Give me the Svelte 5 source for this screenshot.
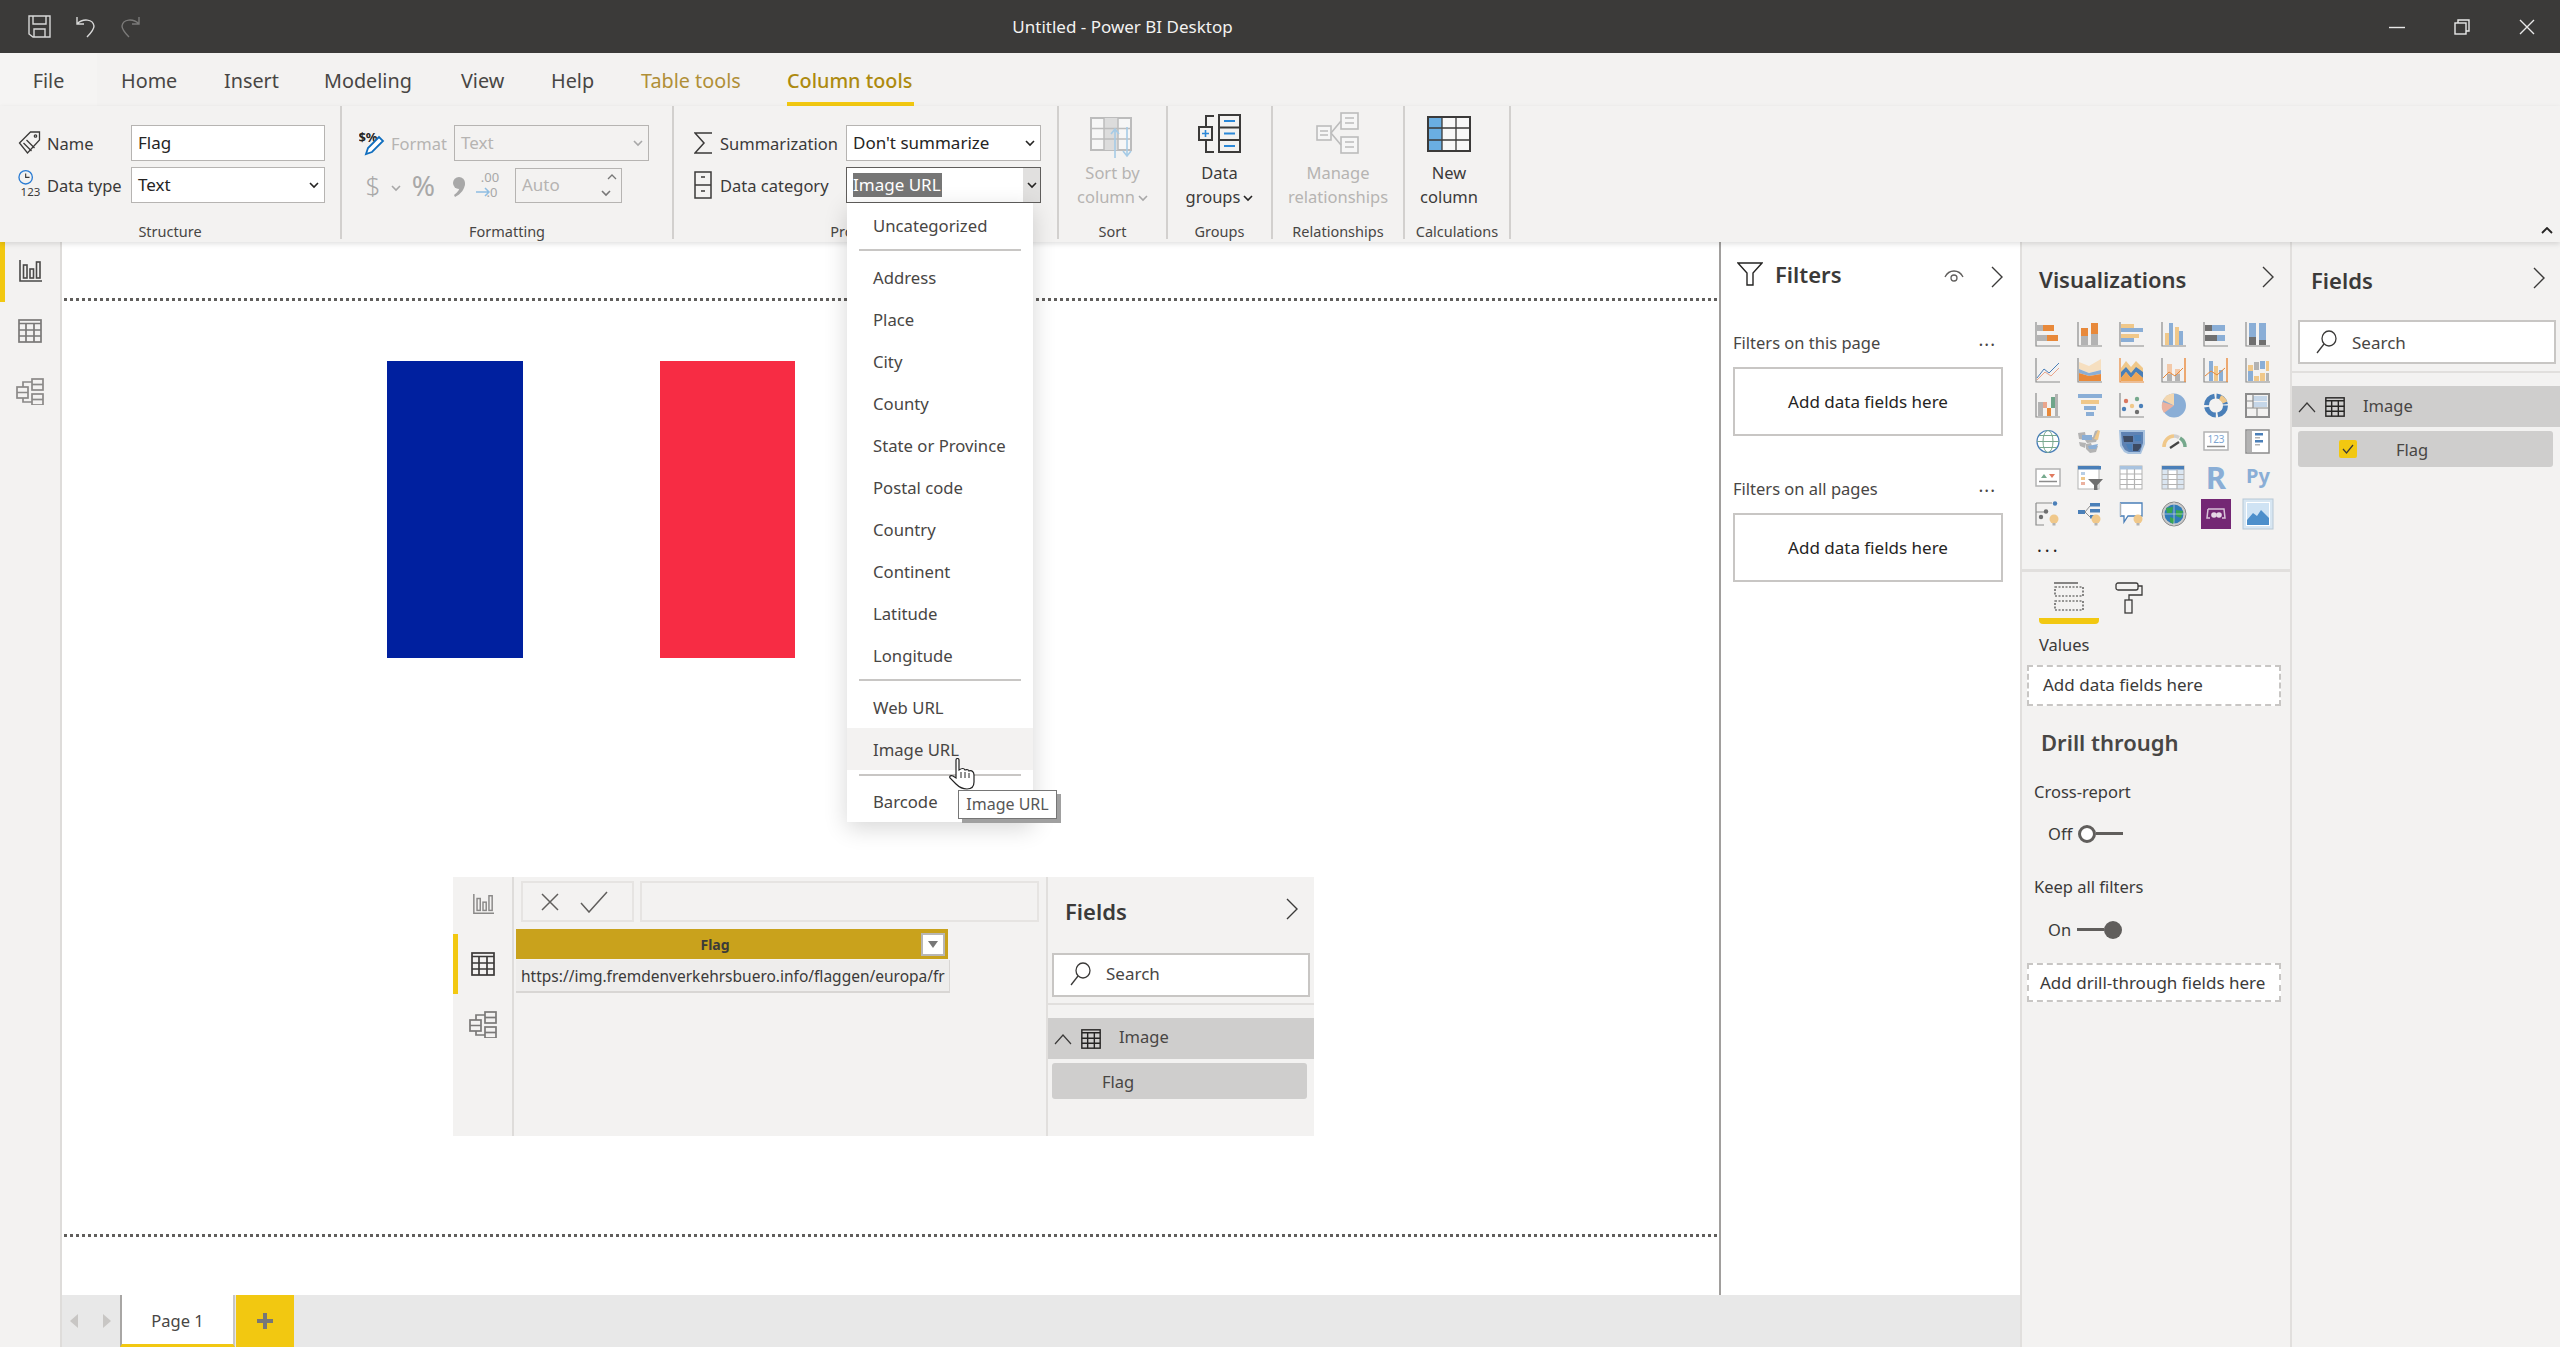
<script>
  const tabs = ['Home', 'Insert', 'Modeling', 'View', 'Help'];
  const cats1 = ['Address', 'Place', 'City', 'County', 'State or Province', 'Postal code', 'Country', 'Continent', 'Latitude', 'Longitude'];

  const or = '#e8893a', gr = '#b3b3b3', dg = '#6f6f6f', bl = '#8aaed6', db = '#4a7fb8', tn = '#f0c88a', ax = '#8c8c8c';
  const r = (x, y, w, h, c) => `<rect x="${x}" y="${y}" width="${w}" height="${h}" fill="${c}"/>`;
  const p = (d, c, s = 1) => `<path d="${d}" fill="none" stroke="${c}" stroke-width="${s}"/>`;
  const f = (d, c) => `<path d="${d}" fill="${c}"/>`;
  const axes = p('M1 0V24H25', ax, 1.2);
  const c = (x, y, rad, col) => `<circle cx="${x}" cy="${y}" r="${rad}" fill="${col}"/>`;
  const bulb = c(19, 18, 4.5, tn) + r(17.5, 22, 3, 2.5, gr);
  const t = (x, y, s, col, w, txt) => `<text x="${x}" y="${y}" font-size="${s}" fill="${col}" font-weight="${w}" font-family="Noto Sans, sans-serif" text-anchor="middle">${txt}</text>`;

  // visual gallery, row by row
  const viz = [
    axes + r(2, 3, 6, 6, gr) + r(8, 3, 11, 6, or) + r(2, 13, 10, 6, gr) + r(12, 13, 11, 6, or),
    axes + r(4, 14, 7, 9, gr) + r(4, 6, 7, 8, or) + r(14, 12, 7, 11, gr) + r(14, 1, 7, 11, or),
    axes + r(2, 2, 13, 4, tn) + r(2, 6, 22, 4, bl) + r(2, 12, 18, 4, tn) + r(2, 16, 13, 4, bl),
    axes + r(4, 11, 4, 12, tn) + r(8, 1, 4, 22, bl) + r(14, 5, 4, 18, tn) + r(18, 9, 4, 14, bl),
    axes + r(2, 3, 7, 6, dg) + r(9, 3, 13, 6, bl) + r(2, 13, 12, 6, dg) + r(14, 13, 8, 6, bl),
    axes + r(4, 1, 7, 14, bl) + r(4, 15, 7, 8, dg) + r(14, 1, 7, 17, bl) + r(14, 18, 7, 5, dg),
    axes + p('M2 20L9 11L14 15L24 5', db) + p('M2 22L10 14L16 18L24 10', '#e9a58c'),
    axes + f('M2 4L12 8L24 1V12L12 15L2 11Z', '#f6dfc0') + f('M2 11L12 15L24 12V16L12 18L2 15Z', bl) + f('M2 15L12 18L24 16V23H2Z', or),
    p('M1 0V24H25', or, 1.2) + f('M2 10L7 3L12 9L17 3L24 10V23H2Z', tn) + f('M2 14L7 9L12 15L17 9L24 14L24 20L17 14L12 20L7 14L2 20Z', db) + f('M2 20L7 14L12 20L17 14L24 20V23H2Z', '#efa556'),
    axes + p('M24 0V24', or, 1.4) + r(6, 6, 5, 10, '#f3c9a8') + r(6, 16, 5, 7, gr) + r(14, 11, 5, 5, '#f3c9a8') + r(14, 16, 5, 7, gr) + p('M2 20L8 14L14 18L22 10', or),
    axes + p('M24 0V24', or, 1.4) + r(6, 3, 4, 20, bl) + r(11, 8, 4, 15, tn) + r(16, 12, 4, 11, bl) + p('M2 18L8 13L14 17L22 10', or),
    axes + r(3, 7, 5, 6, tn) + r(3, 13, 5, 10, bl) + r(9, 4, 5, 8, gr) + r(9, 18, 5, 5, tn) + r(15, 3, 5, 8, bl) + r(15, 15, 5, 8, tn) + r(21, 3, 3, 10, tn) + r(21, 15, 3, 8, gr),
    axes + r(3, 9, 5, 14, gr) + r(8, 9, 4, 6, '#e9a58c') + r(12, 15, 4, 8, or) + r(16, 4, 4, 11, '#6fa58a') + r(20, 1, 3, 22, gr),
    r(1, 1, 24, 4, bl) + r(4, 7, 18, 4, tn) + r(7, 13, 12, 4, bl) + r(9, 19, 8, 4, bl),
    axes + c(7, 8, 2.2, '#d9775f') + c(18, 6, 2.2, '#76a98d') + c(13, 13, 2.2, tn) + c(5, 16, 2.2, db) + c(22, 13, 2.2, db) + c(18, 19, 2.2, dg),
    c(13, 12.5, 12, '#8aaed6') + f('M13 12.5L2 7A12 12 0 0 1 13 .5Z', '#f3d7b0') + f('M13 12.5L3 20A12 12 0 0 1 1.5 9Z', '#ebb2a0'),
    `<circle cx="13" cy="12.5" r="9.5" fill="none" stroke="${db}" stroke-width="5" stroke-dasharray="13 2"/>` + `<path d="M17 4.5A9.5 9.5 0 0 1 22 9.5" fill="none" stroke="${tn}" stroke-width="5"/>`,
    `<rect x="1" y="1" width="23" height="23" fill="none" stroke="${ax}" stroke-width="2"/>` + r(8, 3, 14, 5, '#c5d6e8') + r(8, 9, 14, 5, '#c5d6e8') + p('M1 15H24M12 15V24M8 1V15M1 8H8', ax, 1.2),
    `<circle cx="13" cy="12.5" r="11" fill="#fff" stroke="${db}" stroke-width="1.2"/><ellipse cx="13" cy="12.5" rx="5" ry="11" fill="none" stroke="#79a88f"/>` + p('M2 12.5H24M4 6.5H22M4 18.5H22', '#79a88f'),
    f('M1 4L8 3L9 9L16 8L18 2L21 1V8L19 13L10 14L8 11L2 10Z', gr) + f('M5 6H15V11H5Z', bl) + f('M17 10L21 1L23 2L21 11Z', tn) + f('M2 13L9 14L8 19L3 17Z', gr) + f('M9 15L14 14L15 17L21 17L19 23L13 24L9 20Z', gr) + f('M11 17L21 15L19 20L12 20Z', bl),
    f('M0 1H26V15L22 25H9L5 23L1 17Z', '#a9c3df') + f('M2 3H24V14L21 23H10L6 21L3 16Z', '#5e82b3') + f('M4 7H14V13H5Z', '#3d4b63') + f('M15 6H22V12H16Z', '#4a7fb8') + f('M7 15H13V22L9 20Z', '#4a7fb8') + f('M14 15H22V18L19 22H14Z', '#3d4b63'),
    `<path d="M3 18A10.5 10.5 0 0 1 13 7" fill="none" stroke="${tn}" stroke-width="3.5"/><path d="M13 7A10.5 10.5 0 0 1 18 8.5" fill="none" stroke="#cfcfcf" stroke-width="3.5"/><path d="M19 9A10.5 10.5 0 0 1 24 18" fill="none" stroke="#76a98d" stroke-width="3.5"/>` + p('M9 19L18 13', '#444', 2.2),
    `<rect x="1" y="3" width="24" height="18" fill="#fff" stroke="${gr}" stroke-width="1.5"/>` + t(13, 14, 10, '#7ea5d1', 400, '123') + p('M4 17.5H22', ax, 1.5),
    `<rect x="1" y="1" width="23" height="23" fill="#fff" stroke="${ax}" stroke-width="1.5"/>` + r(2, 2, 5, 21, gr) + r(10, 4, 8, 2.5, db) + r(10, 8, 5, 1.5, gr) + r(10, 11, 8, 2.5, db) + r(10, 15, 5, 1.5, gr),
    `<rect x="1" y="4" width="24" height="17" fill="#fff" stroke="${gr}" stroke-width="1.5"/>` + f('M6 13L9 9L12 13Z', '#76a98d') + f('M14 9H20L17 13Z', '#e07a5f') + p('M4 16.5H22', ax, 1.5),
    `<rect x="1" y="1" width="21" height="23" fill="#fff" stroke="${gr}" stroke-width="1"/>` + r(1, 1, 23, 3.5, db) + r(4, 7, 4, 3, '#b7cde5') + r(4, 12, 4, 3, tn) + r(4, 17, 4, 3, '#ebb2a0') + f('M11 14H26L20.5 20V25H17V20Z', '#6f6f6f'),
    `<rect x="1" y="1" width="22" height="23" fill="#fff" stroke="${gr}" stroke-width="1"/>` + r(1, 1, 22, 3.5, '#a9c3df') + p('M1 9H23M1 14.5H23M1 19.5H23M8 4V24M15.5 4V24', gr, 1.2),
    `<rect x="1" y="1" width="22" height="23" fill="#dbe6f1" stroke="${gr}" stroke-width="1"/>` + r(1, 1, 22, 3.5, db) + r(7, 6, 9, 17, '#fff') + p('M1 9.5H23M1 14.5H23M1 19.5H23M7 4V24M16 4V24', gr, 1.2),
    t(13, 24, 31, '#8aaed6', 700, 'R'),
    t(13, 18, 20, '#8aaed6', 700, 'Py'),
    p('M1 2V24H9M1 2H17M1 11H13', ax, 1.2) + c(20, 2.5, 2.2, db) + c(11, 10.5, 2.2, dg) + c(6, 16, 2.2, dg) + bulb,
    r(1, 9, 7, 4, db) + p('M8 11L13 5M8 11L13 16', ax) + r(13, 2, 10, 3.5, db) + r(13, 8, 10, 3.5, db) + r(13, 14, 4, 3.5, db) + bulb,
    `<path d="M1.5 2H23V15H9L5 21V15H1.5Z" fill="#fff" stroke="${db}" stroke-width="1.3"/>` + `<path d="M1.5 2V15" stroke="${gr}"/>` + bulb,
    `<circle cx="13" cy="13" r="12" fill="#c9c9c9" stroke="#8a8a8a"/>` + c(13, 13, 9.5, '#2f7bb8') + f('M5 7L12 6L11 12L6 12Z', '#38a552') + f('M15 9L22 10L20 17L15 15Z', '#38a552') + f('M9 16L14 18L12 23L9 21Z', '#38a552') + p('M1 13H25M13 1V25', '#e0e0e0', .6),
    r(-2, -2, 30, 30, '#742774') + `<path d="M5 8H21L22 17H19M7 17H4L5 8" fill="none" stroke="#d8c2d8" stroke-width="1.5"/>` + c(11, 14, 2.8, '#e6d6e6') + c(16, 14, 2.8, '#e6d6e6'),
    `<rect x="-2" y="-2" width="30" height="30" fill="#d7e6f2" stroke="#b8c8d6"/>` + r(1, 1, 24, 24, '#fff') + r(2, 2, 22, 22, '#cfe3f4') + f('M2 19L8 12L12 15L16 9L24 17V24H2Z', '#4d8fcb'),
  ];
</script>

{#snippet chev(cls = '')}
  <svg class="chev {cls}" viewBox="0 0 12 22"><path d="M1 1L11 11L1 21" fill="none" stroke="#3b3a39" stroke-width="1.4"/></svg>
{/snippet}

{#snippet caret(col = '#252423')}
  <svg class="caret" viewBox="0 0 10 7"><path d="M1 1L5 5L9 1" fill="none" stroke={col} stroke-width="1.6"/></svg>
{/snippet}

{#snippet reportIcon(col, w = 24)}
  <svg width={w} height={w} viewBox="0 0 24 24" fill="none" stroke={col} stroke-width="1.6"><path d="M2 1V22H24"/><rect x="5.5" y="6" width="3.5" height="13"/><rect x="12" y="10" width="3.5" height="9"/><rect x="18.5" y="3" width="3.5" height="16"/></svg>
{/snippet}

{#snippet tableIcon(col, w = 24)}
  <svg width={w} height={w} viewBox="0 0 24 24" fill="none" stroke={col} stroke-width="1.7"><rect x="1" y="1" width="22" height="22"/><path d="M1 4.5H23M1 11H23M1 17H23M8 4.5V23M16 4.5V23"/></svg>
{/snippet}

{#snippet modelIcon(col, w = 28)}
  <svg width={w} height={w} viewBox="0 0 28 28" fill="none" stroke={col} stroke-width="1.7"><rect x="16" y="2" width="11" height="11"/><path d="M16 7.5H27"/><rect x="16" y="17" width="11" height="11"/><path d="M16 22.5H27"/><rect x="1" y="10" width="11" height="11"/><path d="M1 15.5H12M7 10V5H16M7 21V25H16"/></svg>
{/snippet}

{#snippet searchBox()}
  <div class="search">
    <svg width="22" height="24" viewBox="0 0 22 24" fill="none" stroke="#3b3a39" stroke-width="1.3"><ellipse cx="13" cy="8.5" rx="7" ry="7.5"/><path d="M8 14L1 23"/></svg>
    <span>Search</span>
  </div>
{/snippet}

<div class="app">
  <header class="titlebar">
    <div class="qat">
      <svg width="23" height="23" viewBox="0 0 23 23" fill="none" stroke="#d8d8d8" stroke-width="1.4"><path d="M1 1H22V22H5L1 19Z"/><path d="M5 1V9H18V1M6 22V14H17V22"/></svg>
      <svg width="21" height="23" viewBox="0 0 21 23" fill="none" stroke="#d8d8d8" stroke-width="1.4"><path d="M2 2V9H9M2 9C8 3 18 4 19 11C19 15 16 18 12 22"/></svg>
      <svg class="redo" width="21" height="23" viewBox="0 0 21 23" fill="none" stroke="#7b7a79" stroke-width="1.4"><path d="M19 2V9H12M19 9C13 3 3 4 2 11C2 15 5 18 9 22"/></svg>
    </div>
    <span class="wintitle">Untitled - Power BI Desktop</span>
    <div class="winbtns">
      <svg width="16" height="16" viewBox="0 0 16 16" stroke="#e8e8e8" stroke-width="1.4"><path d="M0 8.5H16"/></svg>
      <svg width="16" height="16" viewBox="0 0 16 16" fill="none" stroke="#e8e8e8" stroke-width="1.4"><rect x="1" y="4" width="11" height="11"/><path d="M4 4V1H15V12H12"/></svg>
      <svg width="16" height="16" viewBox="0 0 16 16" stroke="#e8e8e8" stroke-width="1.4"><path d="M1 1L15 15M15 1L1 15"/></svg>
    </div>
  </header>

  <nav class="tabs">
    <span class="tab file">File</span>
    {#each tabs as tab}
      <span class="tab">{tab}</span>
    {/each}
    <span class="tab ctx">Table tools</span>
    <span class="tab ctx active">Column tools</span>
  </nav>

  <section class="ribbon">
    <div class="group g-structure">
      <div class="form">
        <div class="row">
          <svg class="ico" width="22" height="24" viewBox="0 0 22 24" fill="none" stroke="#3b3a39" stroke-width="1.3"><path d="M1 12L12 1H21V9L9 22Z"/><path d="M5 12L13 20M8 9L16 17"/><circle cx="17" cy="5" r="1.2"/></svg>
          <span class="lbl name">Name</span>
          <div class="field w194">Flag</div>
        </div>
        <div class="row">
          <svg class="ico" width="24" height="34" viewBox="0 0 24 34"><circle cx="8" cy="9" r="7" fill="none" stroke="#2b7cd3" stroke-width="1.4"/><path d="M8 5V9H12" fill="none" stroke="#3b3a39" stroke-width="1.2"/><text x="13" y="28" font-size="12" font-family="Noto Sans, sans-serif" fill="#3b3a39" text-anchor="middle">123</text></svg>
          <span class="lbl name">Data type</span>
          <div class="field w194 sel">Text {@render caret()}</div>
        </div>
      </div>
      <span class="glabel">Structure</span>
    </div>

    <div class="group g-format">
      <div class="form">
        <div class="row">
          <svg class="ico" width="26" height="28" viewBox="0 0 26 28"><text x="9" y="13" font-size="13" font-weight="700" font-family="Noto Sans, sans-serif" fill="#252423" text-anchor="middle">$%</text><path d="M7 25L9 19L20 8L24 12L13 23Z" fill="#fff" stroke="#106ebe" stroke-width="1.8"/></svg>
          <span class="lbl dim fmt">Format</span>
          <div class="field w195 off sel">Text {@render caret('#a8a8a8')}</div>
        </div>
        <div class="row">
          <span class="glyph dollar">$</span>
          <span class="tiny">{@render caret('#a8a8a8')}</span>
          <span class="glyph pct">%</span>
          <svg class="comma" width="14" height="20" viewBox="0 0 14 20"><circle cx="7" cy="6" r="6" fill="#a8a8a8"/><path d="M13 6C13 12 9 17 3 20L2 18C6 15 8 12 8 8Z" fill="#a8a8a8"/></svg>
          <svg class="decs" width="24" height="30" viewBox="0 0 24 30"><text x="14" y="12" font-size="13" font-family="Noto Sans, sans-serif" fill="#a8a8a8" text-anchor="middle">.00</text><text x="16" y="27" font-size="13" font-family="Noto Sans, sans-serif" fill="#a8a8a8" text-anchor="middle">.0</text><path d="M0 22H13M9 18L13 22L9 26" fill="none" stroke="#8ebde2" stroke-width="1.5"/></svg>
          <div class="field auto off">
            Auto
            <span class="spin">
              <svg class="caret up" viewBox="0 0 10 7"><path d="M1 5L5 1L9 5" fill="none" stroke="#777" stroke-width="1.3"/></svg>
              {@render caret('#777')}
            </span>
          </div>
        </div>
      </div>
      <span class="glabel">Formatting</span>
    </div>

    <div class="group g-props">
      <div class="form">
        <div class="row">
          <svg class="ico" width="18" height="24" viewBox="0 0 18 24" fill="none" stroke="#3b3a39" stroke-width="1.5"><path d="M18 2H1L10 12L1 22H18"/></svg>
          <span class="lbl prop">Summarization</span>
          <div class="field w195 sel">Don't summarize {@render caret()}</div>
        </div>
        <div class="row">
          <svg class="ico" width="18" height="28" viewBox="0 0 18 28" fill="none" stroke="#3b3a39" stroke-width="1.5"><rect x="1" y="1" width="16" height="26"/><path d="M1 14H17M7 6H11M7 20H11"/></svg>
          <span class="lbl prop">Data category</span>
          <div class="field w195 focus"><mark>Image URL</mark><span class="btn">{@render caret()}</span></div>
        </div>
      </div>
      <span class="glabel">Properties</span>
    </div>

    <div class="group g-big g-sort">
      <svg class="big" width="46" height="42" viewBox="0 0 46 42" fill="none"><rect x="1" y="1" width="40" height="32" fill="#f6f6f6" stroke="#bcbcbc" stroke-width="2"/><rect x="14" y="1" width="14" height="32" fill="#dcdcdc"/><path d="M1 11.5H41M1 22H41M14 1V33M28 1V33" stroke="#bcbcbc" stroke-width="1.5"/><path d="M25 41V12M21 17L25 12L29 17M37 10V39M33 34L37 39L41 34" stroke="#a6cbe6" stroke-width="1.6"/></svg>
      <span class="bigtext dim">Sort by<br />column<span class="inl">{@render caret('#a8a8a8')}</span></span>
      <span class="glabel">Sort</span>
    </div>

    <div class="group g-big g-groups">
      <svg class="big" width="44" height="40" viewBox="0 0 44 40" fill="none"><path d="M16 2H8V12M8 26V38H16" stroke="#3b3a39" stroke-width="2"/><rect x="1" y="13" width="13" height="13" stroke="#3b3a39" stroke-width="2"/><path d="M4 19.5H11M7.5 16V23" stroke="#2b88d8" stroke-width="1.6"/><rect x="21" y="1" width="21" height="37" stroke="#3b3a39" stroke-width="2"/><path d="M21 13.5H42M21 26H42" stroke="#3b3a39" stroke-width="2"/><path d="M26 7H37M26 19.5H37M26 32H37" stroke="#2b88d8" stroke-width="2"/></svg>
      <span class="bigtext">Data<br />groups<span class="inl">{@render caret()}</span></span>
      <span class="glabel">Groups</span>
    </div>

    <div class="group g-big g-rel">
      <svg class="big" width="44" height="42" viewBox="0 0 44 42" fill="none" stroke="#bcbcbc" stroke-width="1.6"><rect x="1" y="14" width="14" height="14" fill="#f6f6f6"/><rect x="25" y="1" width="17" height="16" fill="#f6f6f6"/><rect x="25" y="25" width="17" height="16" fill="#f6f6f6"/><path d="M15 21L25 9M15 21L25 33M4 19H12M4 23H12M29 6H38M29 11H38M29 30H38M29 35H38"/></svg>
      <span class="bigtext dim">Manage<br />relationships</span>
      <span class="glabel">Relationships</span>
    </div>

    <div class="group g-big g-calc">
      <svg class="big" width="44" height="36" viewBox="0 0 44 36" fill="none"><rect x="1" y="1" width="14" height="34" fill="#6aaee2"/><rect x="15" y="1" width="28" height="34" fill="#f8f8f8"/><path d="M1 12H43M1 24H43M15 1V35M29 1V35" stroke="#3b3a39" stroke-width="1.3"/><rect x="1" y="1" width="42" height="34" stroke="#3b3a39" stroke-width="2"/></svg>
      <span class="bigtext">New<br />column</span>
      <span class="glabel">Calculations</span>
    </div>

    <svg class="collapse" viewBox="0 0 12 7"><path d="M1 6L6 1L11 6" fill="none" stroke="#252423" stroke-width="1.8"/></svg>
  </section>

  <main class="body">
    <aside class="rail">
      <div class="railitem on">{@render reportIcon('#4a4948')}</div>
      <div class="railitem">{@render tableIcon('#7a7978')}</div>
      <div class="railitem">{@render modelIcon('#8a8988')}</div>
    </aside>

    <div class="center">
      <div class="upper">
        <div class="canvas">
          <div class="page">
            <div class="flagpart blue"></div>
            <div class="flagpart red"></div>

            <div class="inset">
              <div class="inset-rail">
                <div class="railitem">{@render reportIcon('#8a8988', 22)}</div>
                <div class="railitem on">{@render tableIcon('#3b3a39', 24)}</div>
                <div class="railitem">{@render modelIcon('#7a7978', 28)}</div>
              </div>
              <div class="inset-main">
                <div class="formula">
                  <div class="fbtns">
                    <svg width="20" height="20" viewBox="0 0 20 20" stroke="#605e5c" stroke-width="1.5"><path d="M2 2L18 18M18 2L2 18"/></svg>
                    <svg width="28" height="22" viewBox="0 0 28 22" fill="none" stroke="#605e5c" stroke-width="1.5"><path d="M1 12L9 21L27 1"/></svg>
                  </div>
                  <div class="finput"></div>
                </div>
                <div class="colhead">
                  <span>Flag</span>
                  <div class="filterbtn"><svg width="10" height="7" viewBox="0 0 10 7"><path d="M0 0H10L5 7Z" fill="#777"/></svg></div>
                </div>
                <div class="cell">https://img.fremdenverkehrsbuero.info/flaggen/europa/fr</div>
              </div>
              <div class="inset-fields">
                <div class="fhead in">
                  <span>Fields</span>
                  {@render chev()}
                </div>
                {@render searchBox()}
                <div class="hr"></div>
                <div class="tree-head">
                  <svg class="up" width="18" height="12" viewBox="0 0 18 12"><path d="M1 11L9 2L17 11" fill="none" stroke="#3b3a39" stroke-width="1.2"/></svg>
                  {@render tableIcon('#252423', 20)}
                  <span>Image</span>
                </div>
                <div class="tree-item plain"><span>Flag</span></div>
              </div>
            </div>
          </div>
        </div>

        <aside class="filters">
          <div class="fil-head">
            <svg width="26" height="24" viewBox="0 0 26 24" fill="none" stroke="#252423" stroke-width="1.4"><path d="M1 1H25L16 11V23H10V11Z"/></svg>
            <span class="fil-title">Filters</span>
            <svg class="eye" width="20" height="16" viewBox="0 0 20 16" fill="none" stroke="#605e5c" stroke-width="1.3"><path d="M1 9C5 1 15 1 19 9"/><circle cx="10" cy="10" r="3"/></svg>
            {@render chev()}
          </div>
          <div class="fil-sec first"><span>Filters on this page</span><b>...</b></div>
          <div class="dropbox">Add data fields here</div>
          <div class="fil-sec"><span>Filters on all pages</span><b>...</b></div>
          <div class="dropbox">Add data fields here</div>
        </aside>
      </div>

      <footer class="pagebar">
        <svg class="pg" width="9" height="14" viewBox="0 0 9 14"><path d="M8 0V14L0 7Z" fill="#c8c6c4"/></svg>
        <svg class="pg next" width="9" height="14" viewBox="0 0 9 14"><path d="M0 0V14L8 7Z" fill="#c8c6c4"/></svg>
        <div class="pagetab">Page 1</div>
        <div class="addtab"><svg width="18" height="18" viewBox="0 0 18 18"><path d="M7 1H11V7H17V11H11V17H7V11H1V7H7Z" fill="#777"/></svg></div>
      </footer>
    </div>

    <aside class="viz">
      <div class="fhead">
        <span>Visualizations</span>
        {@render chev()}
      </div>
      <div class="gallery">
        {#each viz as v}
          <svg width="26" height="26" viewBox="0 0 26 26">{@html v}</svg>
        {/each}
      </div>
      <div class="more">...</div>
      <div class="wells">
        <div class="welltab on">
          <svg width="30" height="30" viewBox="0 0 30 30" fill="none" stroke="#3b3a39" stroke-width="1.2"><path d="M0 1H24" /><path stroke-dasharray="2 1.5" d="M1 5H29V14H1ZM1 19H29V28H1Z"/></svg>
        </div>
        <div class="welltab">
          <svg width="28" height="32" viewBox="0 0 28 32" fill="none" stroke="#3b3a39" stroke-width="1.3"><rect x="1" y="1" width="22" height="7" rx="2"/><path d="M23 4H27V13H14V18"/><rect x="10" y="18" width="7" height="13"/></svg>
        </div>
      </div>
      <div class="pane-lbl values">Values</div>
      <div class="dash one">Add data fields here</div>
      <h3>Drill through</h3>
      <div class="pane-lbl cross">Cross-report</div>
      <div class="toggle"><span>Off</span><i class="knob hollow"></i><i class="line"></i></div>
      <div class="pane-lbl keep">Keep all filters</div>
      <div class="toggle second"><span>On</span><i class="line"></i><i class="knob"></i></div>
      <div class="dash two">Add drill-through fields here</div>
    </aside>

    <aside class="fields">
      <div class="fhead">
        <span>Fields</span>
        {@render chev()}
      </div>
      {@render searchBox()}
      <div class="hr"></div>
      <div class="tree-head">
        <svg class="up" width="18" height="12" viewBox="0 0 18 12"><path d="M1 11L9 2L17 11" fill="none" stroke="#3b3a39" stroke-width="1.2"/></svg>
        {@render tableIcon('#252423', 20)}
        <span>Image</span>
      </div>
      <div class="tree-item">
        <i class="check"><svg width="12" height="10" viewBox="0 0 12 10"><path d="M1 5L4.5 9L11 1" fill="none" stroke="#3b3a39" stroke-width="1.2"/></svg></i>
        <span>Flag</span>
      </div>
    </aside>
  </main>

  <div class="menu">
    <div class="item">Uncategorized</div>
    <div class="div d1"></div>
    {#each cats1 as cat}
      <div class="item">{cat}</div>
    {/each}
    <div class="div d2"></div>
    <div class="item low">Web URL</div>
    <div class="item low hover">Image URL</div>
    <div class="div d3"></div>
    <div class="item low">Barcode</div>
  </div>

  <div class="tooltip">Image URL</div>

  <svg class="hand" width="26" height="32" viewBox="0 0 26 32"><path d="M7 2C7 0 10 0 10 2V12C13 10 15 10 16 12C18 11 20 12 20 13C23 12 25 14 25 17V24C25 28 23 31 18 31C13 31 10 29 7 26L1 20C0 18 2 17 4 18L7 20Z" fill="#fff" stroke="#222" stroke-width="1.2"/><path d="M12 14V20M16 14V20M20 15V20" stroke="#222" stroke-width="1"/></svg>
</div>

<style>
  :global(body) { margin: 0; background: #fff; }
  .app {
    position: relative;
    width: 2560px;
    height: 1347px;
    overflow: hidden;
    font-family: "Noto Sans", "Open Sans", sans-serif;
    font-size: 16px;
    color: #3b3a39;
    background: #f3f2f1;
  }
  svg { display: block; flex: none; }

  .titlebar {
    height: 53px;
    background: #3b3a39;
    display: flex;
    align-items: center;
    position: relative;
  }
  .qat { display: flex; align-items: center; gap: 24px; padding-left: 28px; }
  .wintitle {
    position: absolute;
    left: 0;
    width: 2245px;
    text-align: center;
    color: #f3f2f1;
    font-size: 17px;
    pointer-events: none;
  }
  .winbtns { margin-left: auto; display: flex; gap: 49px; padding-right: 25px; }

  .tabs { height: 53px; display: flex; background: #f3f2f1; position: relative; }
  .tab { position: absolute; top: 0; line-height: 56px; font-size: 19.8px; color: #484644; white-space: nowrap; }
  .tab:nth-child(1) { left: 0; width: 97px; text-align: center; background: #f5f4f3; }
  .tab:nth-child(2) { left: 121px; }
  .tab:nth-child(3) { left: 224px; }
  .tab:nth-child(4) { left: 324px; }
  .tab:nth-child(5) { left: 461px; }
  .tab:nth-child(6) { left: 551px; }
  .tab:nth-child(7) { left: 641px; color: #b08f37; }
  .tab:nth-child(8) { left: 787px; color: #ad8a0f; font-weight: 500; border-bottom: 4px solid #f2c811; height: 49px; width: 127px; }

  .ribbon { height: 136px; display: flex; position: relative; box-shadow: 0 2px 5px rgba(0,0,0,.12); z-index: 2; background: #f3f2f1; }
  .group {
    box-sizing: border-box;
    height: 133px;
    border-right: 2px solid #d2d0ce;
    position: relative;
    flex: none;
  }
  .g-structure { width: 342px; padding-left: 18px; }
  .g-format { width: 332px; padding-left: 17px; }
  .g-props { width: 385px; padding-left: 20px; }
  .g-sort { width: 109px; }
  .g-groups { width: 105px; }
  .g-rel { width: 132px; }
  .g-calc { width: 106px; padding-right: 16px; }
  .glabel {
    position: absolute;
    left: 0;
    right: 0;
    bottom: -4px;
    height: 24px;
    line-height: 24px;
    text-align: center;
    font-size: 14.5px;
    color: #484644;
  }
  .form { padding-top: 19px; display: flex; flex-direction: column; gap: 6px; }
  .row { display: flex; align-items: center; height: 36px; }
  .ico { margin-right: 6px; }
  .lbl { font-size: 16.5px; white-space: nowrap; }
  .name { width: 84px; }
  .g-structure .ico { width: 23px; }
  .dim { color: #b6b4b2; }
  .fmt { width: 63px; }
  .prop { width: 126px; margin-left: 2px; }
  .field {
    box-sizing: border-box;
    height: 36px;
    background: #fff;
    border: 1px solid #b6b4b2;
    padding-left: 6px;
    font-size: 17px;
    line-height: 34px;
    color: #252423;
    display: flex;
    align-items: center;
    justify-content: space-between;
  }
  .w194 { width: 194px; }
  .w195 { width: 195px; }
  .off { background: transparent; color: #b6b4b2; }
  .sel { padding-right: 5px; }
  .caret { width: 10px; height: 7px; }
  .focus { border-color: #605e5c; padding-right: 0; position: relative; }
  .focus mark { background: #767676; color: #fff; padding: 0 1px 0 0; line-height: 24px; }
  .focus .btn { width: 17px; height: 34px; background: #e1e0df; display: flex; align-items: center; justify-content: center; }
  .glyph { color: #a8a8a8; font-size: 30px; line-height: 36px; }
  .dollar { margin-left: 6px; width: 16px; font-size: 26px; font-weight: 300; text-align: center; }
  .tiny { margin: 6px 0 0 10px; width: 10px; }
  .pct { margin-left: 10px; width: 24px; font-size: 28px; text-align: center; letter-spacing: -1px; }
  .comma { margin-left: 17px; margin-top: 4px; }
  .decs { margin-left: 10px; }
  .auto { width: 107px; height: 35px; margin-left: 15px; color: #b6b4b2; padding-right: 4px; }
  .spin { display: flex; flex-direction: column; gap: 9px; }

  .g-big { display: flex; flex-direction: column; align-items: center; padding-top: 8px; }
  .big { height: auto; }
  .g-sort .big { margin-top: 3px; }
  .g-rel .big { margin-top: -2px; }
  .g-calc .big { margin-top: 2px; }
  .bigtext {
    position: absolute;
    top: 55px;
    left: 0;
    right: 0;
    text-align: center;
    font-size: 16.5px;
    line-height: 24px;
    white-space: nowrap;
  }
  .g-calc .bigtext { right: 16px; }
  .inl { display: inline-block; margin-left: 3px; vertical-align: 1px; }
  .collapse { position: absolute; right: 7px; top: 121px; width: 12px; height: 7px; }

  .body { display: flex; height: 1105px; }
  .rail { width: 62px; box-sizing: border-box; border-right: 2px solid #dedcda; display: flex; flex-direction: column; flex: none; }
  .railitem { height: 60px; display: flex; align-items: center; justify-content: center; box-sizing: border-box; padding-bottom: 3px; }
  .railitem.on { box-shadow: inset 5px 0 #f2c811; }
  .center { width: 1958px; display: flex; flex-direction: column; flex: none; }
  .upper { flex: 1; display: flex; min-height: 0; }
  .canvas { flex: 1; background: #fff; position: relative; }
  .page {
    position: relative;
    margin: 56px 0 0 2px;
    height: 939px;
    background:
      repeating-linear-gradient(90deg, #605e5c 0 3px, transparent 3px 6px) left top / 100% 3px no-repeat,
      repeating-linear-gradient(90deg, #605e5c 0 3px, transparent 3px 6px) left bottom / 100% 3px no-repeat;
  }
  .flagpart { position: absolute; top: 63px; height: 297px; }
  .blue { left: 323px; width: 136px; background: #00209f; }
  .red { left: 596px; width: 135px; background: #f72c44; }

  .inset {
    position: absolute;
    left: 389px;
    top: 579px;
    width: 861px;
    height: 259px;
    display: flex;
    background: #f3f2f1;
  }
  .inset-rail { width: 61px; box-sizing: border-box; border-right: 2px solid #dedcda; flex: none; }
  .inset-rail .railitem { padding-bottom: 0; }
  .inset-rail .railitem:first-child { margin-top: -3px; }
  .inset-main { flex: 1; padding: 4px 7px 0 2px; min-width: 0; }
  .formula { display: flex; gap: 6px; height: 41px; margin-left: 5px; }
  .fbtns { width: 113px; box-sizing: border-box; border: 2px solid #e6e4e2; display: flex; align-items: center; gap: 20px; padding-left: 17px; }
  .finput { flex: 1; border: 2px solid #e6e4e2; }
  .colhead {
    margin-top: 7px;
    width: 432px;
    height: 30px;
    box-sizing: border-box;
    padding-right: 34px;
    background: #c9a21c;
    display: flex;
    align-items: center;
    justify-content: center;
    position: relative;
    font-size: 14px;
    font-weight: 700;
    color: #3b3a39;
  }
  .filterbtn {
    position: absolute;
    right: 3px;
    top: 4px;
    width: 24px;
    height: 23px;
    box-sizing: border-box;
    background: #fff;
    border: 2px solid #b8b6b4;
    display: flex;
    align-items: center;
    justify-content: center;
  }
  .cell {
    width: 434px;
    height: 33px;
    box-sizing: border-box;
    background: #eeedec;
    border-bottom: 2px solid #d8d6d4;
    border-right: 1px solid #d8d6d4;
    padding-left: 5px;
    line-height: 32px;
    font-size: 15.5px;
    white-space: nowrap;
    overflow: hidden;
    margin-top: 1px;
    color: #3b3a39;
  }
  .inset-fields { width: 268px; box-sizing: border-box; border-left: 2px solid #e1dfdd; flex: none; }
  .inset-fields .search { margin: 8px 0 0 4px; padding-bottom: 3px; }
  .inset-fields .hr { margin-top: 6px; }
  .inset-fields .tree-head span { padding-bottom: 4px; }
  .inset-fields .tree-item { margin-left: 4px; }

  .filters { width: 301px; box-sizing: border-box; flex: none; background: #fff; border-left: 2px solid #a19f9d; padding: 0 17px 0 12px; position: relative; z-index: 1; }
  .fil-head { height: 64px; display: flex; align-items: center; padding: 0 0 0 4px; margin-bottom: 2px; }
  .fil-head .chev { margin: 6px 0 0 27px; }
  .fil-title { font-size: 22px; font-weight: 600; margin-left: 12px; color: #3b3a39; flex: 1; }
  .eye { margin-top: 4px; }
  .fil-sec { display: flex; justify-content: space-between; align-items: center; height: 26px; margin-top: 39px; font-size: 16.5px; color: #484644; padding-right: 7px; }
  .fil-sec.first { margin-top: 23px; }
  .fil-sec b { font-weight: 400; font-size: 18px; margin-top: -6px; letter-spacing: 1px; }
  .dropbox {
    margin-top: 12px;
    height: 69px;
    box-sizing: border-box;
    border: 2px solid #c8c6c4;
    display: flex;
    align-items: center;
    justify-content: center;
    font-size: 17px;
    color: #252423;
  }

  .pagebar { height: 52px; background: #e8e8e8; display: flex; align-items: center; position: relative; flex: none; }
  .pg { margin-left: 8px; }
  .pg.next { margin-left: 24px; }
  .pagetab {
    margin-left: 8px;
    width: 115px;
    height: 52px;
    box-sizing: border-box;
    background: #fff;
    border-left: 2px solid #a8a6a4;
    border-right: 2px solid #c8c6c4;
    border-bottom: 3px solid #f2c811;
    text-align: center;
    line-height: 52px;
    font-size: 16.5px;
    color: #484644;
  }
  .addtab { margin-left: 1px; width: 58px; height: 52px; background: #f2c811; display: flex; align-items: center; justify-content: center; }

  .viz { width: 272px; flex: none; box-sizing: border-box; border-right: 2px solid #e1dfdd; border-left: 2px solid #e1dfdd; }
  .fields { flex: 1; min-width: 0; }
  .fhead { height: 75px; display: flex; align-items: center; justify-content: space-between; box-sizing: border-box; padding: 0 16px 2px 17px; font-size: 22px; font-weight: 600; color: #3b3a39; }
  .fhead .chev { margin-top: -4px; }
  .fields .fhead { padding: 0 15px 2px 19px; height: 78px; }
  .fhead.in { height: 68px; padding: 0 16px 0 17px; }
  .chev { width: 12px; height: 22px; }

  .gallery {
    display: grid;
    grid-template-columns: repeat(6, 42px);
    grid-auto-rows: 35.8px;
    padding-left: 5px;
    justify-items: center;
    align-items: center;
  }
  .gallery svg { overflow: visible; }
  .more { height: 37px; padding-left: 15px; font-size: 18px; line-height: 26px; letter-spacing: 3px; color: #252423; }
  .wells { border-top: 3px solid #e1dfdd; display: flex; padding: 10px 0 0 17px; gap: 16px; }
  .welltab { width: 60px; height: 42px; display: flex; justify-content: center; box-sizing: border-box; }
  .welltab.on { border-bottom: 6px solid #f2c811; border-radius: 0 0 4px 4px; }
  .welltab + .welltab { width: 28px; }
  .pane-lbl { font-size: 16.5px; color: #3b3a39; line-height: 24px; }
  .values { margin: 9px 0 0 17px; }
  .dash {
    box-sizing: border-box;
    margin-left: 5px;
    width: 254px;
    background: #fff;
    border: 2px dashed #c8c6c4;
    font-size: 17px;
    color: #3b3a39;
  }
  .one { margin-top: 8px; height: 41px; line-height: 35px; padding-left: 14px; }
  .two { margin-top: 20px; height: 39px; line-height: 35px; padding-left: 11px; white-space: nowrap; }
  h3 { margin: 20px 0 0 19px; font-size: 22px; font-weight: 600; line-height: 32px; color: #484644; }
  .cross { margin: 22px 0 0 12px; }
  .keep { margin: 28px 0 0 12px; }
  .toggle { height: 26px; margin: 17px 0 0 26px; display: flex; align-items: center; font-size: 16.5px; line-height: 26px; }
  .toggle.second { margin-top: 18px; }
  .toggle span { margin-right: 6px; }
  .knob { width: 18px; height: 18px; box-sizing: border-box; border-radius: 50%; background: #605e5c; }
  .knob.hollow { background: #fff; border: 3px solid #605e5c; }
  .line { width: 27px; height: 3px; background: #605e5c; }

  .search {
    margin-left: 6px;
    width: 258px;
    height: 44px;
    box-sizing: border-box;
    background: #fff;
    border: 2px solid #c8c6c4;
    display: flex;
    align-items: center;
    gap: 14px;
    padding-left: 16px;
    font-size: 17px;
    color: #484644;
  }
  .hr { height: 2px; background: #e1dfdd; margin-top: 7px; }
  .tree-head {
    margin-top: 13px;
    height: 41px;
    background: #cfcecd;
    display: flex;
    align-items: center;
    font-size: 16.5px;
    color: #484644;
  }
  .up { margin: 0 0 0 6px; }
  .tree-head span { margin-left: 18px; padding-bottom: 2px; }
  .tree-head :global(svg:nth-child(2)) { margin-left: 9px; }
  .tree-item {
    margin: 4px 0 0 6px;
    width: 255px;
    height: 36px;
    background: #cfcecd;
    border-radius: 3px;
    display: flex;
    align-items: center;
    font-size: 16.5px;
    color: #484644;
  }
  .tree-item.plain { padding-left: 50px; box-sizing: border-box; }
  .check { margin-left: 41px; width: 18px; height: 18px; border-radius: 2px; background: #f2c811; display: flex; align-items: center; justify-content: center; }
  .tree-item .check + span { margin-left: 39px; }

  .menu {
    position: absolute;
    left: 847px;
    top: 203px;
    width: 186px;
    height: 619px;
    padding-top: 2px;
    box-sizing: border-box;
    background: #fff;
    box-shadow: 0 6px 22px rgba(0,0,0,.16);
    z-index: 5;
  }
  .item { height: 42px; line-height: 41px; padding-left: 26px; font-size: 16.7px; color: #484644; white-space: nowrap; }
  .item.low { line-height: 44px; }
  .hover { background: #f3f2f1; }
  .div { height: 2px; background: #c8c6c4; margin: 0 12px; }
  .d1 { margin-top: 2px; margin-bottom: 6px; }
  .d2 { margin-top: 2px; margin-bottom: 5px; }
  .d3 { margin-top: 4px; margin-bottom: 4px; }
  .tooltip {
    position: absolute;
    left: 958px;
    top: 790px;
    box-sizing: border-box;
    width: 99px;
    height: 29px;
    background: #fff;
    border: 1px solid #767676;
    box-shadow: 4px 4px 0 #a0a0a0;
    font-size: 16px;
    line-height: 27px;
    text-align: center;
    color: #575757;
    z-index: 6;
  }
  .hand { position: absolute; left: 949px; top: 758px; z-index: 7; }
</style>
